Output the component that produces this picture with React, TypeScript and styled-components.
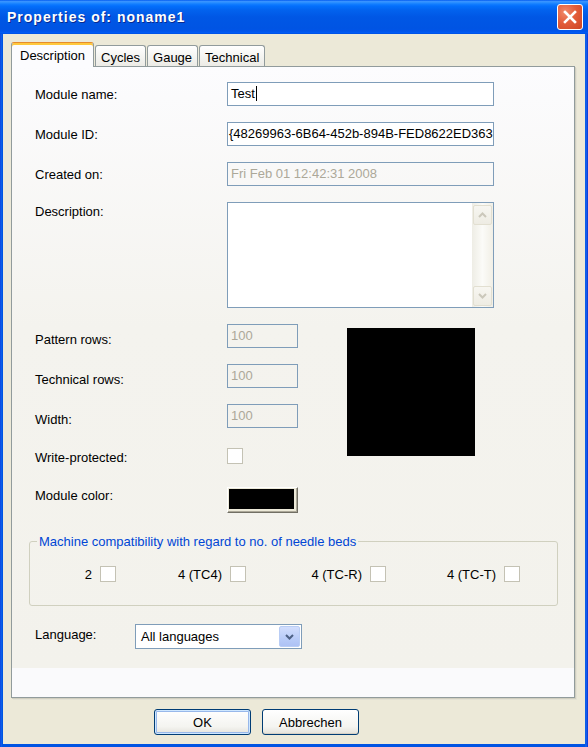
import React from 'react';
import styled, { createGlobalStyle } from 'styled-components';

const GlobalStyle = createGlobalStyle`
  html, body {
    margin: 0;
    padding: 0;
    background: #ece9d8;
  }
  body {
    font-family: "Liberation Sans", Arial, sans-serif;
    font-size: 13px;
    color: #000;
    overflow: hidden;
  }
  * {
    box-sizing: border-box;
  }
`;

const Window = styled.div`
  width: 588px;
  height: 747px;
  display: flex;
  flex-direction: column;
  background: linear-gradient(to right, #0831d9 0px, #166aee 1px, #0054e3 2px, #0054e3 585px, #166aee 586px, #0831d9 588px);
`;

const TitleBar = styled.div`
  flex: none;
  height: 34px;
  display: flex;
  align-items: center;
  justify-content: space-between;
  padding: 0 5px 0 7px;
  background: linear-gradient(
    to bottom,
    #0058ee 0%,
    #3a93ff 4%,
    #288eff 8%,
    #127dff 12%,
    #036ffc 18%,
    #0262ee 30%,
    #0057e5 50%,
    #0054e3 85%,
    #0055eb 92%,
    #005bf5 96%,
    #0050e0 100%
  );
`;

const Title = styled.div`
  color: #fff;
  font-weight: bold;
  font-size: 14px;
  letter-spacing: 1px;
  text-shadow: 1px 1px 0 #0a2a8e;
`;

const CloseButton = styled.div`
  width: 26px;
  height: 26px;
  border: 1px solid #fff;
  border-radius: 3px;
  background: radial-gradient(circle at 30% 30%, #f08a6c 0%, #e35d3b 45%, #cc4423 100%);
  display: flex;
  align-items: center;
  justify-content: center;
`;

const Body = styled.div`
  flex: 1;
  margin: 0 3px 3px;
  padding: 8px 10px 0 8px;
  background: #ece9d8;
  display: flex;
  flex-direction: column;
`;

const TabStrip = styled.div`
  display: flex;
  align-items: flex-end;
  height: 24px;
  position: relative;
  z-index: 1;
`;

const Tab = styled.div<{ $active?: boolean }>`
  display: flex;
  align-items: center;
  height: ${(p) => (p.$active ? 25 : 21)}px;
  margin-bottom: ${(p) => (p.$active ? -1 : 0)}px;
  margin-left: ${(p) => (p.$active ? 0 : 1)}px;
  padding: 0 ${(p) => (p.$active ? 8 : 5)}px;
  padding-top: ${(p) => (p.$active ? 0 : 2)}px;
  border: 1px solid #919b9c;
  border-bottom: none;
  border-top-color: ${(p) => (p.$active ? '#e68b2c' : '#919b9c')};
  border-radius: 3px 3px 0 0;
  background: ${(p) => (p.$active ? '#fcfcfe' : 'linear-gradient(#ffffff, #f3f3ef 60%, #ecebe6)')};
  box-shadow: ${(p) => (p.$active ? 'inset 0 2px 0 #ffc83c' : 'none')};
  white-space: nowrap;
`;

const Panel = styled.div`
  height: 632px;
  border: 1px solid #919b9c;
  box-shadow: 1px 1px 0 #d0cebf, 2px 2px 0 #e3e1d4;
  display: flex;
  flex-direction: column;
`;

const Page = styled.div`
  height: 601px;
  flex: none;
  padding: 15px 0 0 17px;
  background: linear-gradient(#fcfcfe 0px, #f4f3ee 260px, #f3f2ec 100%);
`;

const PageFooter = styled.div`
  flex: 1;
  background: #fafafc;
`;

const Row = styled.div<{ $top: number; $cols?: string }>`
  display: grid;
  grid-template-columns: ${(p) => p.$cols ?? '192px auto'};
  align-items: start;
  margin-top: ${(p) => p.$top}px;
  padding-left: 6px;
`;

const Label = styled.div<{ $dy: number }>`
  padding-top: ${(p) => p.$dy}px;
  line-height: 15px;
  white-space: nowrap;
`;

const TextBox = styled.div<{ $w: number; $disabled?: boolean; $pad?: number }>`
  width: ${(p) => p.$w}px;
  height: 24px;
  border: 1px solid #7f9db9;
  background: ${(p) => (p.$disabled ? 'transparent' : '#fff')};
  color: ${(p) => (p.$disabled ? '#aca899' : '#000')};
  padding: 0 0 0 ${(p) => p.$pad ?? 3}px;
  line-height: 22px;
  white-space: nowrap;
  overflow: hidden;
`;

const Caret = styled.span`
  display: inline-block;
  width: 1px;
  height: 15px;
  background: #000;
  vertical-align: -3px;
  margin-left: 1px;
`;

const MemoBox = styled.div`
  width: 267px;
  height: 106px;
  border: 1px solid #7f9db9;
  background: #fff;
  display: flex;
  justify-content: flex-end;
`;

const ScrollBar = styled.div`
  width: 21px;
  padding: 2px 1px 1px;
  display: flex;
  flex-direction: column;
  justify-content: space-between;
  background: linear-gradient(to right, #eeede5, #fbfbf8 50%, #f1efe6);
`;

const ScrollButton = styled.div`
  height: 20px;
  border: 1px solid #e2dfd1;
  border-radius: 2px;
  background: linear-gradient(#f7f6f1, #eeece3);
  display: flex;
  align-items: center;
  justify-content: center;
`;

const Split = styled.div`
  display: flex;
  margin-top: 16px;
`;

const Column = styled.div`
  display: flex;
  flex-direction: column;
`;

const Swatch = styled.div`
  width: 128px;
  height: 128px;
  margin: 4px 0 0 49px;
  background: #000;
`;

const CheckBox = styled.div`
  width: 16px;
  height: 16px;
  border: 1px solid #c4c2b4;
  background: #fff;
`;

const ColorButton = styled.div`
  width: 71px;
  height: 26px;
  border-style: solid;
  border-width: 1px;
  border-color: #fff #716f64 #716f64 #fff;
  box-shadow: inset -1px -1px 0 #aca899;
  padding: 1px 3px 3px 1px;
  background: #ece9d8;
`;

const ColorFill = styled.div`
  width: 100%;
  height: 100%;
  background: #000;
`;

const GroupBox = styled.fieldset`
  width: 529px;
  margin: 21px 0 0;
  padding: 17px 0 23px;
  border: 1px solid #d0d0bf;
  border-radius: 3px;
`;

const Legend = styled.legend`
  margin-left: 7px;
  padding: 0 2px;
  color: #0046d5;
  line-height: 15px;
`;

const CompatRow = styled.div`
  display: grid;
  grid-template-columns: 86px 130px 140px 134px;
`;

const CompatItem = styled.div`
  display: flex;
  align-items: center;
  justify-content: flex-end;
  gap: 8px;
  line-height: 15px;
`;

const Combo = styled.div`
  width: 167px;
  height: 25px;
  border: 1px solid #7f9db9;
  background: #fff;
  display: flex;
  align-items: center;
  justify-content: space-between;
  padding: 0 0 0 5px;
`;

const ComboButton = styled.div`
  width: 21px;
  height: 21px;
  margin-right: 1px;
  border: 1px solid #b9cdf5;
  border-radius: 2px;
  background: linear-gradient(#d2defd, #b9ccf8 60%, #adc2f5);
  display: flex;
  align-items: center;
  justify-content: center;
`;

const ButtonRow = styled.div`
  display: flex;
  gap: 11px;
  margin-top: 11px;
  padding-left: 143px;
`;

const DialogButton = styled.div<{ $default?: boolean }>`
  width: 97px;
  height: 26px;
  border: 1px solid #003c74;
  border-radius: 3px;
  background: linear-gradient(#ffffff, #f4f4f0 70%, #e3e2da);
  box-shadow: ${(p) =>
    p.$default ? 'inset 0 0 0 1px #cee7ff, inset 0 0 0 2px #98b8ea' : 'inset 0 -1px 0 #d6d0c5'};
  display: flex;
  align-items: center;
  justify-content: center;
`;

const Chevron: React.FC<{ up?: boolean; color: string }> = ({ up, color }) => (
  <svg width="9" height="6" viewBox="0 0 9 6">
    <path
      d={up ? 'M1 5 L4.5 1.5 L8 5' : 'M1 1 L4.5 4.5 L8 1'}
      fill="none"
      stroke={color}
      strokeWidth="2"
    />
  </svg>
);

const compat = ['2', '4 (TC4)', '4 (TC-R)', '4 (TC-T)'];

const App: React.FC = () => {
  return (
    <>
      <GlobalStyle />
      <Window>
        <TitleBar>
          <Title>Properties of: noname1</Title>
          <CloseButton>
            <svg width="14" height="14" viewBox="0 0 14 14">
              <path d="M2 2 L12 12 M12 2 L2 12" stroke="#fff" strokeWidth="2.6" strokeLinecap="square" />
            </svg>
          </CloseButton>
        </TitleBar>
        <Body>
          <TabStrip>
            <Tab $active>Description</Tab>
            <Tab>Cycles</Tab>
            <Tab>Gauge</Tab>
            <Tab>Technical</Tab>
          </TabStrip>
          <Panel>
            <Page>
              <Row $top={0}>
                <Label $dy={5}>Module name:</Label>
                <TextBox $w={267}>
                  Test
                  <Caret />
                </TextBox>
              </Row>
              <Row $top={16}>
                <Label $dy={5}>Module ID:</Label>
                <TextBox $w={267} $pad={1}>
                  {'{48269963-6B64-452b-894B-FED8622ED363'}
                </TextBox>
              </Row>
              <Row $top={16}>
                <Label $dy={5}>Created on:</Label>
                <TextBox $w={267} $disabled>
                  Fri Feb 01 12:42:31 2008
                </TextBox>
              </Row>
              <Row $top={16}>
                <Label $dy={2}>Description:</Label>
                <MemoBox>
                  <ScrollBar>
                    <ScrollButton>
                      <Chevron up color="#cbc8bb" />
                    </ScrollButton>
                    <ScrollButton>
                      <Chevron color="#cbc8bb" />
                    </ScrollButton>
                  </ScrollBar>
                </MemoBox>
              </Row>
              <Split>
                <Column>
                  <Row $top={0} $cols="192px 71px">
                    <Label $dy={8}>Pattern rows:</Label>
                    <TextBox $w={71} $disabled>
                      100
                    </TextBox>
                  </Row>
                  <Row $top={16} $cols="192px 71px">
                    <Label $dy={8}>Technical rows:</Label>
                    <TextBox $w={71} $disabled>
                      100
                    </TextBox>
                  </Row>
                  <Row $top={16} $cols="192px 71px">
                    <Label $dy={8}>Width:</Label>
                    <TextBox $w={71} $disabled>
                      100
                    </TextBox>
                  </Row>
                  <Row $top={20} $cols="192px 71px">
                    <Label $dy={2}>Write-protected:</Label>
                    <CheckBox />
                  </Row>
                  <Row $top={22} $cols="192px 71px">
                    <Label $dy={1}>Module color:</Label>
                    <ColorButton>
                      <ColorFill />
                    </ColorButton>
                  </Row>
                </Column>
                <Swatch />
              </Split>
              <GroupBox>
                <Legend>Machine compatibility with regard to no. of needle beds</Legend>
                <CompatRow>
                  {compat.map((name) => (
                    <CompatItem key={name}>
                      {name}
                      <CheckBox />
                    </CompatItem>
                  ))}
                </CompatRow>
              </GroupBox>
              <Row $top={18} $cols="100px 167px">
                <Label $dy={3}>Language:</Label>
                <Combo>
                  All languages
                  <ComboButton>
                    <Chevron color="#4d6185" />
                  </ComboButton>
                </Combo>
              </Row>
            </Page>
            <PageFooter />
          </Panel>
          <ButtonRow>
            <DialogButton $default>OK</DialogButton>
            <DialogButton>Abbrechen</DialogButton>
          </ButtonRow>
        </Body>
      </Window>
    </>
  );
};

export default App;
